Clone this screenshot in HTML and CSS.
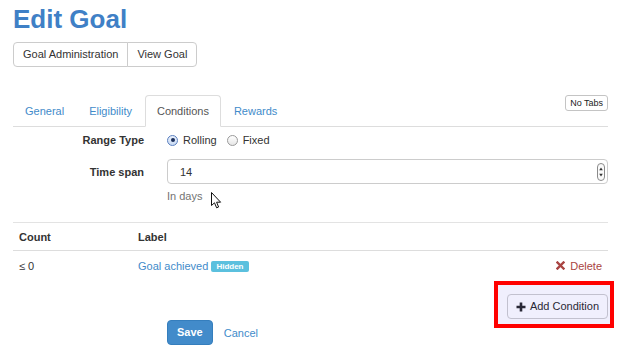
FILE: index.html
```html
<!DOCTYPE html>
<html lang="en">
<head>
<meta charset="UTF-8">
<title>Edit Goal</title>
<link rel="stylesheet" href="styles.css">
</head>
<body>
  <h1 class="page_title">Edit Goal</h1>
  <div class="btn_group">
    <a class="btn" href="#">Goal Administration</a><a class="btn" href="#">View Goal</a>
  </div>

  <div class="tab_bar">
    <ul class="tabs">
      <li><a href="#">General</a></li>
      <li><a href="#">Eligibility</a></li>
      <li class="active"><a href="#">Conditions</a></li>
      <li><a href="#">Rewards</a></li>
    </ul>
    <button class="btn_mini" type="button">No Tabs</button>
  </div>

  <form class="goal_form" action="/" method="get">
    <div class="row row_radio">
      <label class="row_label">Range Type</label>
      <div class="radios">
        <label class="radio"><span class="dot checked"></span>Rolling</label>
        <label class="radio"><span class="dot"></span>Fixed</label>
      </div>
    </div>
    <div class="row">
      <label class="row_label" for="span">Time span</label>
      <div class="field">
        <input id="span" type="text" value="14">
        <svg class="stepper" width="8" height="18" viewBox="0 0 8 18">
          <rect x="0.5" y="0.5" width="7" height="17" rx="3.5" fill="#fafafa" stroke="#8a8a8a"/>
          <path d="M2.2 7.2 L4 4.6 L5.8 7.2 Z" fill="#333"/>
          <path d="M2.2 10.8 L4 13.4 L5.8 10.8 Z" fill="#333"/>
        </svg>
      </div>
    </div>
    <div class="row">
      <span></span>
      <p class="help">In days</p>
    </div>
  </form>

  <hr class="sep">

  <table class="cond_table">
    <thead>
      <tr><th class="c_count">Count</th><th>Label</th><th></th></tr>
    </thead>
    <tbody>
      <tr>
        <td>&le; 0</td>
        <td><a href="#">Goal achieved</a> <span class="badge">Hidden</span></td>
        <td class="c_del">
          <a class="del" href="#"><svg width="9" height="9" viewBox="0 0 9 9"><path d="M1.5 1.5 L7.5 7.5 M7.5 1.5 L1.5 7.5" stroke="#a94442" stroke-width="2.4" stroke-linecap="square"/></svg>Delete</a>
        </td>
      </tr>
    </tbody>
  </table>

  <div class="add_row">
    <span class="mark">
      <button class="btn btn_add" type="button"><svg width="10" height="10" viewBox="0 0 10 10"><path d="M5 0.5 V9.5 M0.5 5 H9.5" stroke="#222" stroke-width="2.6"/></svg>Add Condition</button>
    </span>
  </div>

  <div class="actions">
    <button class="btn btn_primary" type="button">Save</button>
    <a href="#">Cancel</a>
  </div>

  <svg class="cursor" width="11" height="17" viewBox="0 0 11 17">
    <path d="M0.5 0.5 V13.5 L3.5 10.8 L5.6 15.8 L7.6 15 L5.6 10.2 L9.6 10.2 Z" fill="#fff" stroke="#111" stroke-width="1" stroke-linejoin="round"/>
  </svg>
</body>
</html>
```

FILE: styles.css
```css
html,body{ margin:0; padding:0; background:#fff;}
body{ padding:0 19px 0 13px; font-family:"Liberation Sans", Arial, sans-serif; font-size:11px; color:#333; position:relative;}
a{ color:#428bca; text-decoration:none;}
ul,p{ margin:0; padding:0; list-style:none;}

.page_title{ margin:1px 0 5px; font-size:26px; line-height:36px; font-weight:bold; color:#3f80c6;}

.btn{ display:inline-block; height:25px; line-height:23px; padding:0 9px; border:1px solid #ccc; background:#fff; color:#333; font-family:inherit; font-size:11px; box-sizing:border-box; cursor:pointer;}
.btn_group{ display:flex;}
.btn_group .btn:first-child{ border-radius:4px 0 0 4px;}
.btn_group .btn + .btn{ margin-left:-1px; border-radius:0 4px 4px 0;}

.tab_bar{ display:flex; justify-content:space-between; align-items:flex-start; margin-top:28px; border-bottom:1px solid #ddd;}
.tabs{ display:flex; margin-bottom:-1px;}
.tabs li a{ display:block; padding:0 11px; margin-right:1px; line-height:30px; border:1px solid transparent; border-radius:4px 4px 0 0;}
.tabs li.active a{ color:#555; background:#fff; border-color:#ddd #ddd transparent;}
.btn_mini{ height:16px; padding:0 4px; font-family:"Liberation Sans", Arial, sans-serif; font-size:9px; color:#222; background:#fff; border:1px solid #c4c4c4; border-radius:3px;}

.goal_form{ margin-top:3px;}
.row{ display:grid; grid-template-columns:131px 1fr; column-gap:23px; align-items:center;}
.row + .row{ margin-top:9px;}
.row_label{ text-align:right; font-weight:bold; color:#333;}
.row_radio{ height:20px;}
.radios{ display:flex; align-items:center;}
.radio{ display:flex; align-items:center; margin-right:10px;}
.dot{ width:9px; height:9px; border:1px solid #9a9a9a; border-radius:50%; margin-right:5px; background:linear-gradient(#fff,#e6e6e6); position:relative;}
.dot.checked{ border-color:#5a7fc0; background:linear-gradient(#eaf1fc,#c9daf3);}
.dot.checked:after{ content:""; position:absolute; left:2.5px; top:2.5px; width:4px; height:4px; border-radius:50%; background:#1b2f5a;}

.field{ display:flex; align-items:center; height:25px; border:1px solid #ccc; border-radius:4px; box-sizing:border-box; padding:0 2px 0 12px;}
.field input{ flex:1; border:none; outline:none; padding:0; font-family:inherit; font-size:11px; color:#333; background:transparent;}
.stepper{ display:block;}
.help{ margin-top:-4px; line-height:15px; color:#737373;}

.sep{ margin:18px 0 0; border:0; border-top:1px solid #e3e3e3;}

.cond_table{ width:100%; border-collapse:collapse;}
.cond_table th{ text-align:left; font-weight:bold; padding:0 6px; height:27px; border-bottom:1px solid #ddd;}
.cond_table td{ padding:0 6px; height:30px;}
.cond_table .c_count{ width:107px;}
.c_del{ text-align:right;}
.del{ color:#a94442; display:inline-flex; align-items:center;}
.del svg{ margin-right:5px;}
.badge{ display:inline-block; padding:0 5px; line-height:11px; background:#5bc0de; color:#fff; font-size:8px; font-weight:bold; border-radius:2px; vertical-align:1px;}

.add_row{ display:flex; justify-content:flex-end; margin-top:13px;}
.mark{ position:relative; display:block;}
.mark:after{ content:""; position:absolute; top:-13px; bottom:-9px; left:-13px; right:-6px; border:4px solid #f00; background:rgba(110,100,240,.1); pointer-events:none;}
.btn_add{ display:flex; align-items:center; border-radius:4px; padding:0 8px 0 8px; color:#222;}
.btn_add svg{ margin-right:4px;}

.actions{ display:flex; align-items:center; margin:1px 0 0 154px;}
.btn_primary{ background:#428bca; border-color:#357ebd; color:#fff; font-weight:bold; border-radius:4px; padding:0 9px; margin-right:11px;}

.cursor{ position:absolute; left:211px; top:192px;}
```
